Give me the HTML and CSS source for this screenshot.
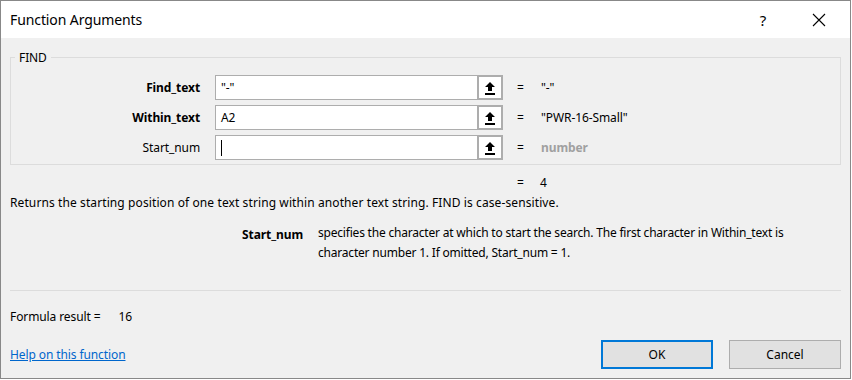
FILE: index.html
```html
<!DOCTYPE html>
<html lang="en">
<head>
  <meta charset="UTF-8">
  <title>Function Arguments</title>
  <link rel="stylesheet" href="styles.css">
</head>
<body>
  <div class="dialog">
    <div class="titlebar">
      <span class="title">Function Arguments</span>
      <span class="help-btn">?</span>
      <span class="close-btn">
        <svg width="14" height="14" viewBox="0 0 14 14"><path d="M1 1 L13 13 M13 1 L1 13" stroke="#000" stroke-width="1.1" fill="none"/></svg>
      </span>
    </div>

    <div class="content">
      <fieldset class="group">
        <legend>FIND</legend>
        <div class="args">
          <label class="arg-name required">Find_text</label>
          <div class="field">"-"</div>
          <button class="ref-btn"><svg width="12" height="14" viewBox="0 0 12 14"><path d="M6 1 L11 6 H8 V10 H4 V6 H1 Z" fill="#000"/><rect x="1" y="12" width="10" height="2" fill="#000"/></svg></button>
          <span class="eq">=</span>
          <span class="val">"-"</span>

          <label class="arg-name required">Within_text</label>
          <div class="field">A2</div>
          <button class="ref-btn"><svg width="12" height="14" viewBox="0 0 12 14"><path d="M6 1 L11 6 H8 V10 H4 V6 H1 Z" fill="#000"/><rect x="1" y="12" width="10" height="2" fill="#000"/></svg></button>
          <span class="eq">=</span>
          <span class="val">"PWR-16-Small"</span>

          <label class="arg-name">Start_num</label>
          <div class="field"><span class="caret"></span></div>
          <button class="ref-btn"><svg width="12" height="14" viewBox="0 0 12 14"><path d="M6 1 L11 6 H8 V10 H4 V6 H1 Z" fill="#000"/><rect x="1" y="12" width="10" height="2" fill="#000"/></svg></button>
          <span class="eq">=</span>
          <span class="val hint">number</span>
        </div>
      </fieldset>

      <div class="result-row">
        <span class="eq">=</span>
        <span class="val">4</span>
      </div>
      <p class="summary">Returns the starting position of one text string within another text string. FIND is case-sensitive.</p>

      <div class="arg-help">
        <span class="arg-help-name">Start_num</span>
        <span class="arg-help-text">specifies the character at which to start the search. The first character in Within_text is character number 1. If omitted, Start_num = 1.</span>
      </div>

      <hr class="sep">

      <div class="formula">Formula result = <span class="formula-val">16</span></div>

      <div class="footer">
        <a href="#" class="help-link">Help on this function</a>
        <div class="buttons">
          <button class="btn default">OK</button>
          <button class="btn">Cancel</button>
        </div>
      </div>
    </div>
  </div>
</body>
</html>
```

FILE: styles.css
```css
body {
  margin: 0;
  background: #fff;
  font-family: "Noto Sans", "Open Sans", sans-serif;
  font-size: 12px;
  letter-spacing: -0.1px;
  color: #000;
}

.dialog {
  width: 849px;
  height: 377px;
  border: 1px solid #888;
  background: #f0f0f0;
  display: flex;
  flex-direction: column;
}

.titlebar {
  height: 37px;
  background: #fff;
  display: flex;
  align-items: center;
}

.title {
  font-size: 14px;
  padding-left: 9px;
  flex: 1;
}

.help-btn {
  font-size: 15px;
  width: 46px;
  text-align: center;
  margin-right: 10px;
}

.close-btn {
  width: 46px;
  display: flex;
  justify-content: center;
  margin-right: 8px;
}

.content {
  padding: 0 9px 0 9px;
  flex: 1;
  display: flex;
  flex-direction: column;
}

.group {
  margin: 11px 0 0 0;
  padding: 0;
  border: 1px solid #dcdcdc;
  height: 114px;
}

.group legend {
  margin-left: 4px;
  padding: 0 4px;
}

.args {
  display: grid;
  grid-template-columns: 204px 262px 26px 38px 1fr;
  grid-auto-rows: 25px;
  row-gap: 5px;
  margin-top: 9px;
  align-items: center;
}

.arg-name {
  text-align: right;
  padding-right: 15px;
}

.arg-name.required {
  font-weight: bold;
}

.field {
  height: 25px;
  box-sizing: border-box;
  border: 1px solid #adadad;
  border-right: none;
  background: #fff;
  padding: 0 5px;
  display: flex;
  align-items: center;
}

.caret {
  width: 1px;
  height: 16px;
  background: #000;
}

.ref-btn {
  height: 25px;
  width: 26px;
  box-sizing: border-box;
  border: 2px solid #adadad;
  background: #fff;
  padding: 0;
  display: flex;
  align-items: center;
  justify-content: center;
}

.eq {
  padding-left: 14px;
}

.val.hint {
  color: #a0a0a0;
  font-weight: bold;
}

.result-row {
  display: flex;
  padding-left: 507px;
  margin-top: 9px;
}

.result-row .eq {
  width: 23px;
  padding-left: 0;
}

.summary {
  margin: 3px 0 0 0;
  letter-spacing: 0.1px;
}

.arg-help {
  display: flex;
  margin-top: 15px;
  gap: 15px;
}

.arg-help-name {
  width: 293px;
  text-align: right;
  font-weight: bold;
  flex-shrink: 0;
}

.arg-help-text {
  width: 490px;
  line-height: 20px;
  margin-top: -3px;
  letter-spacing: -0.2px;
}

.sep {
  margin: auto 0 0 0;
  border: none;
  border-top: 1px solid #dcdcdc;
}

.formula {
  margin-top: 17px;
}

.formula-val {
  margin-left: 15px;
}

.footer {
  display: flex;
  align-items: center;
  justify-content: space-between;
  margin-top: 15px;
  margin-bottom: 9px;
}

.help-link {
  color: #0066cc;
  text-decoration: underline;
}

.buttons {
  display: flex;
  gap: 16px;
}

.btn {
  width: 112px;
  height: 29px;
  box-sizing: border-box;
  border: 1px solid #adadad;
  background: #e1e1e1;
  font-family: inherit;
  font-size: 12px;
  padding: 0;
}

.btn.default {
  border: 2px solid #0078d7;
}
```
